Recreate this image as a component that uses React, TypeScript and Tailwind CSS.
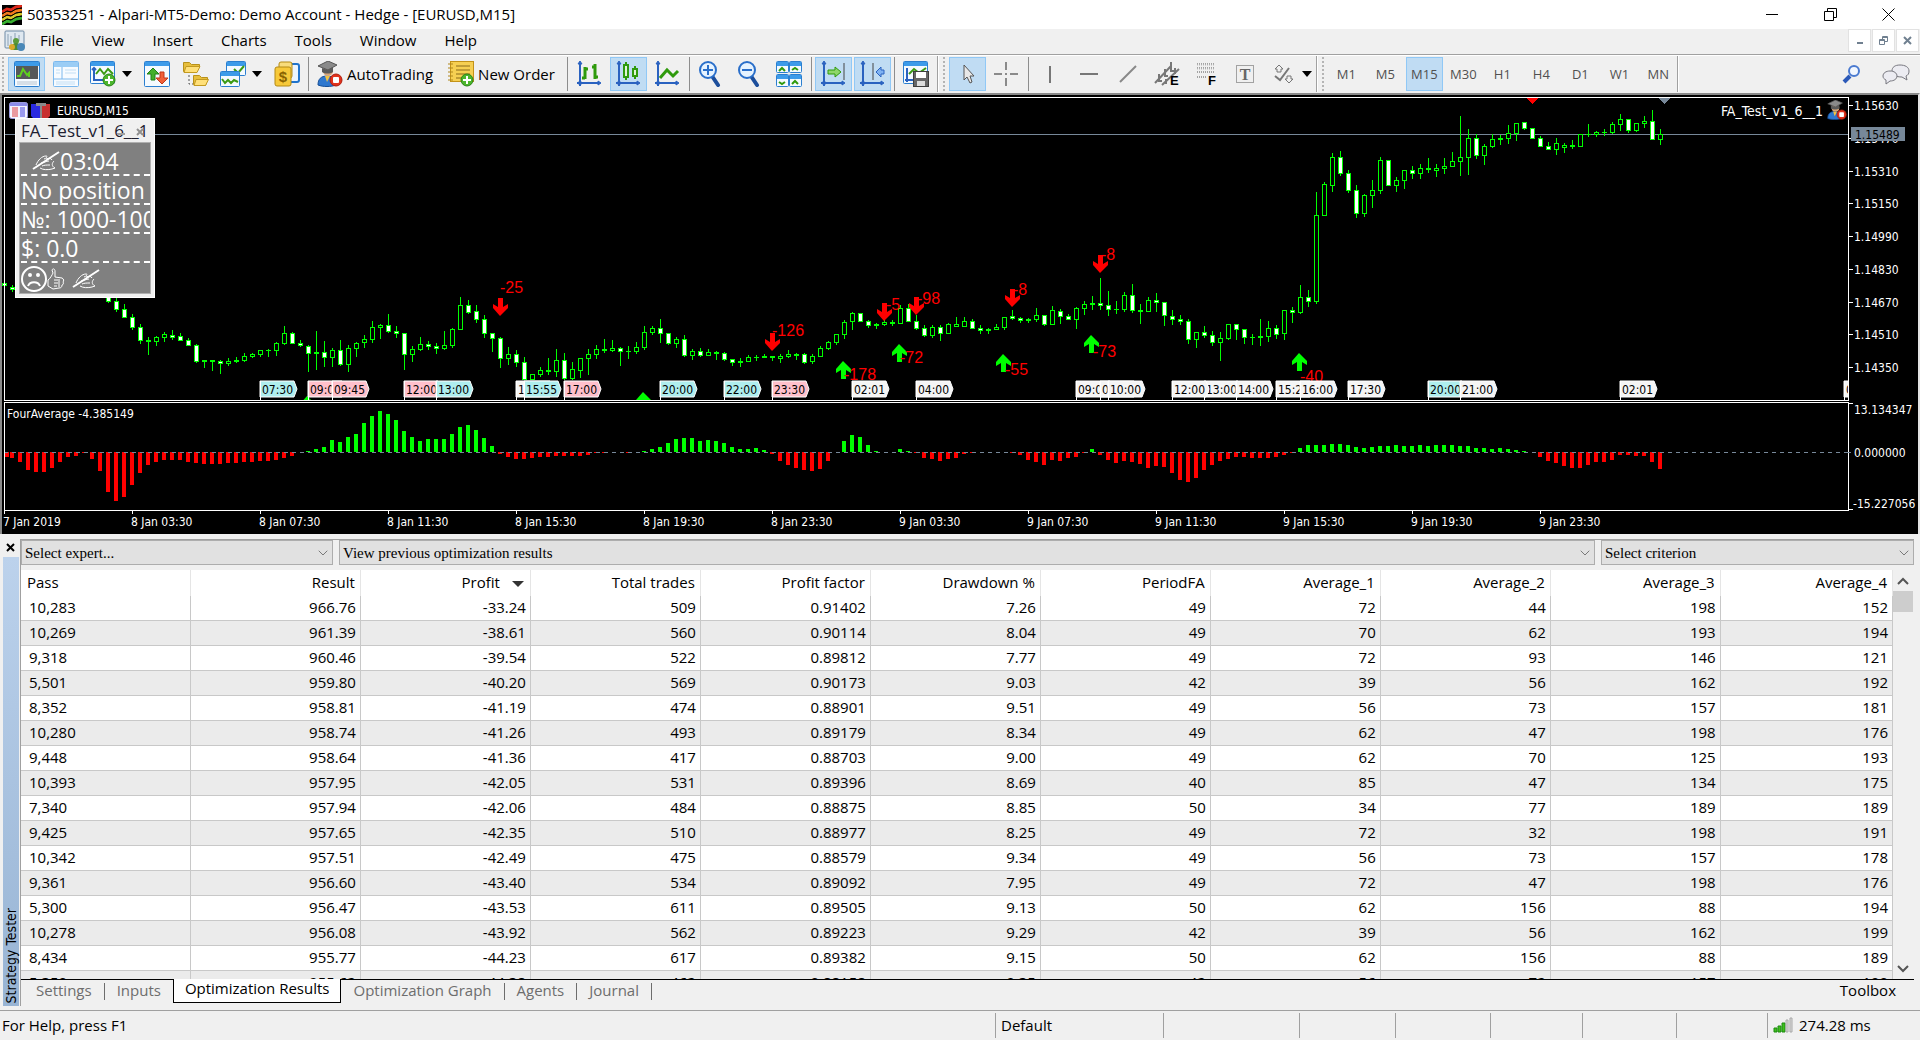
import React, { useState } from 'react';
import clsx from 'clsx';
import { ChevronDown } from 'lucide-react';

type Candle = [number, number, number, number, number];

const FIRST_X = 4;
const STEP = 8;
const ZERO_Y = 452;

// [high, body top, body bottom, low, filled] for every visible bar
const candlesStart: Candle[] = [
    [282, 283, 286, 286, 1], [285, 287, 290, 292, 1],
];

// starts at bar 13, the bars before it are behind the panel
const candlesRest: Candle[] = [
    [296, 297, 302, 303, 1], [298, 301, 310, 312, 1], [304, 309, 318, 318, 1], [314, 317, 328, 330, 1],
    [324, 327, 341, 344, 1], [337, 340, 342, 355, 0], [336, 337, 342, 346, 0], [332, 334, 338, 342, 0],
    [330, 335, 338, 340, 1], [333, 336, 341, 341, 1], [338, 340, 346, 346, 1], [344, 345, 362, 363, 1],
    [360, 360, 362, 368, 0], [360, 360, 362, 371, 0], [360, 361, 364, 374, 1], [358, 361, 364, 366, 0],
    [357, 360, 362, 363, 0], [353, 356, 361, 362, 0], [353, 354, 357, 358, 0], [350, 350, 355, 357, 0],
    [349, 350, 351, 357, 0], [342, 343, 351, 356, 0], [326, 333, 344, 345, 0], [332, 333, 344, 344, 1],
    [340, 343, 346, 347, 1], [345, 346, 354, 372, 1], [331, 352, 354, 370, 0], [341, 352, 358, 367, 1],
    [348, 350, 358, 367, 0], [340, 350, 365, 366, 1], [345, 348, 365, 372, 0], [342, 343, 349, 357, 0],
    [335, 339, 343, 348, 0], [321, 327, 340, 343, 0], [324, 325, 328, 339, 0], [314, 325, 332, 333, 1],
    [326, 331, 334, 338, 1], [333, 333, 355, 370, 1], [346, 349, 355, 362, 0], [337, 344, 350, 351, 0],
    [341, 344, 347, 350, 1], [343, 346, 349, 354, 1], [331, 345, 349, 350, 0], [328, 329, 346, 348, 0],
    [297, 305, 330, 330, 0], [300, 305, 313, 314, 1], [305, 311, 320, 323, 1], [315, 319, 334, 338, 1],
    [333, 333, 339, 352, 1], [337, 338, 359, 368, 1], [347, 354, 359, 365, 0], [350, 354, 363, 367, 1],
    [357, 362, 380, 380, 1], [374, 374, 380, 380, 0], [367, 370, 375, 377, 0], [358, 370, 372, 375, 0],
    [349, 360, 372, 377, 0], [353, 360, 379, 380, 1], [362, 369, 379, 380, 0], [358, 358, 371, 378, 0],
    [349, 354, 359, 375, 0], [345, 349, 355, 359, 0], [339, 349, 351, 353, 0], [340, 348, 351, 352, 0],
    [347, 348, 352, 366, 1], [346, 351, 352, 359, 0], [342, 347, 352, 354, 0], [326, 332, 348, 350, 0],
    [326, 328, 333, 335, 0], [319, 328, 334, 343, 1], [333, 333, 344, 345, 1], [337, 339, 344, 348, 0],
    [335, 339, 356, 357, 1], [349, 351, 356, 360, 0], [348, 351, 356, 357, 1], [349, 352, 356, 356, 0],
    [351, 352, 354, 360, 0], [352, 353, 360, 361, 1], [359, 359, 363, 366, 1], [358, 361, 363, 367, 0],
    [355, 357, 362, 362, 0], [355, 357, 358, 361, 0], [354, 356, 358, 358, 0], [356, 356, 358, 361, 0],
    [354, 356, 359, 363, 0], [350, 354, 357, 358, 0], [353, 354, 356, 360, 0], [353, 354, 363, 364, 1],
    [354, 356, 362, 364, 0], [346, 348, 357, 357, 0], [341, 342, 349, 350, 0], [334, 334, 343, 345, 0],
    [320, 322, 335, 339, 0], [312, 313, 322, 330, 0], [313, 313, 322, 322, 1], [320, 321, 326, 328, 1],
    [323, 324, 326, 329, 0], [320, 322, 325, 326, 0], [320, 322, 324, 326, 0], [305, 308, 324, 324, 0],
    [304, 308, 322, 322, 1], [315, 321, 329, 330, 1], [325, 328, 336, 337, 1], [325, 327, 336, 338, 0],
    [325, 327, 334, 341, 1], [323, 324, 334, 334, 0], [317, 324, 327, 327, 0], [317, 321, 327, 327, 0],
    [319, 321, 329, 329, 1], [325, 328, 331, 334, 1], [328, 329, 331, 334, 0], [324, 327, 330, 330, 0],
    [317, 317, 328, 330, 0], [310, 316, 319, 320, 1], [317, 318, 321, 323, 1], [318, 319, 321, 323, 0],
    [308, 315, 320, 322, 0], [315, 315, 325, 326, 1], [306, 310, 325, 325, 0], [309, 311, 317, 324, 1],
    [314, 316, 320, 320, 1], [307, 308, 320, 329, 0], [301, 304, 309, 315, 0], [296, 303, 305, 310, 0],
    [278, 303, 306, 310, 1], [291, 305, 310, 316, 1], [301, 309, 310, 314, 0], [292, 295, 310, 312, 0],
    [284, 295, 311, 313, 1], [304, 310, 312, 324, 0], [297, 300, 312, 312, 0], [293, 300, 303, 312, 1],
    [302, 302, 316, 326, 1], [310, 316, 320, 325, 1], [315, 319, 322, 325, 1], [319, 321, 340, 344, 1],
    [332, 332, 340, 348, 0], [326, 332, 336, 338, 1], [331, 335, 343, 346, 1], [332, 338, 343, 361, 0],
    [324, 324, 339, 340, 0], [324, 324, 330, 340, 1], [329, 329, 338, 344, 1], [334, 337, 338, 345, 0],
    [319, 336, 338, 346, 0], [321, 328, 337, 342, 0], [325, 328, 335, 339, 1], [310, 310, 334, 340, 0],
    [307, 310, 313, 323, 1], [285, 297, 313, 314, 0], [290, 297, 302, 307, 1], [192, 215, 302, 304, 0],
    [182, 184, 216, 216, 0], [153, 157, 186, 192, 0], [151, 157, 174, 176, 1], [170, 173, 191, 193, 1],
    [185, 190, 214, 218, 1], [194, 195, 214, 217, 0], [180, 190, 196, 208, 0], [157, 160, 191, 194, 0],
    [160, 160, 186, 186, 1], [177, 180, 186, 192, 0], [170, 170, 181, 189, 0], [166, 170, 174, 179, 1],
    [164, 168, 174, 179, 0], [158, 168, 170, 173, 0], [164, 168, 171, 177, 0], [158, 166, 169, 174, 0],
    [152, 161, 167, 167, 0], [116, 157, 162, 176, 0], [129, 138, 158, 175, 0], [134, 138, 156, 159, 1],
    [144, 146, 156, 165, 0], [134, 139, 147, 148, 0], [135, 138, 140, 145, 0], [125, 133, 139, 144, 0],
    [123, 123, 134, 141, 0], [122, 122, 129, 130, 1], [128, 128, 139, 139, 1], [136, 138, 147, 147, 1],
    [142, 146, 150, 150, 1], [138, 143, 150, 155, 0], [143, 145, 148, 153, 0], [140, 145, 147, 149, 0],
    [134, 134, 147, 147, 0], [124, 134, 135, 137, 0], [131, 132, 135, 137, 0], [129, 132, 133, 136, 0],
    [122, 124, 133, 134, 0], [114, 119, 125, 131, 0], [119, 119, 131, 133, 1], [123, 123, 131, 132, 0],
    [116, 121, 124, 128, 0], [110, 121, 140, 140, 1], [129, 134, 140, 145, 0],
];

const averages = [
    -5, -6, -10, -18, -20, -20, -16, -10, -5, -4, -1, -7, -19, -40, -49, -45, -33, -21, -13, -10, -8, -8, -8, -10,
    -11, -12, -12, -12, -11, -11, -10, -10, -9, -9, -8, -6, -4, 0, 1, 3, 5, 12, 10, 15, 18, 29, 36, 41, 38, 32, 21,
    15, 11, 13, 13, 13, 18, 25, 27, 22, 14, 6, -2, -5, -7, -7, -6, -5, -5, -4, -4, -4, -4, -3, -1, -1, 0, 0, -1, 0,
    1, 3, 5, 9, 13, 14, 14, 11, 12, 11, 9, 5, 3, 3, 4, 2, -2, -9, -13, -16, -18, -19, -17, -9, 0, 11, 17, 15, 7, 1,
    0, 0, 3, 1, -1, -6, -7, -9, -7, -6, -2, -1, 0, 0, 0, 0, -1, -3, -8, -10, -13, -8, -9, -6, -5, -1, 3, -3, -8,
    -11, -9, -10, -12, -16, -14, -15, -21, -28, -30, -26, -18, -13, -9, -7, -5, -5, -6, -6, -6, -5, -3, -1, 4, 7, 7,
    7, 8, 8, 7, 5, 4, 5, 6, 6, 7, 6, 6, 7, 6, 7, 7, 7, 6, 6, 4, 4, 3, 4, 3, 2, 1, 0, -5, -9, -11, -14, -16, -16,
    -13, -10, -10, -8, -3, -3, -4, -4, -10, -17,
];

const CYAN = '#afeeee';
const PINK = '#ffc0cb';
const SMOKE = '#f5f5f5';

const newsTags: [number, string, string][] = [
    [260, '07:30', CYAN], [308, '09:00', PINK], [332, '09:45', PINK], [404, '12:00', PINK], [436, '13:00', CYAN],
    [516, '15:30', SMOKE], [524, '15:55', CYAN], [564, '17:00', PINK], [660, '20:00', CYAN], [724, '22:00', CYAN],
    [772, '23:30', PINK], [852, '02:01', SMOKE], [916, '04:00', SMOKE], [1076, '09:00', SMOKE], [1100, '09:30', SMOKE],
    [1108, '10:00', SMOKE], [1204, '13:00', SMOKE], [1172, '12:00', SMOKE], [1236, '14:00', SMOKE], [1276, '15:25', SMOKE],
    [1300, '16:00', SMOKE], [1348, '17:30', SMOKE], [1428, '20:00', CYAN], [1460, '21:00', SMOKE], [1620, '02:01', SMOKE],
    [1844, '09:00', SMOKE],
];

const sellArrows = [[500, 298], [772, 333], [884, 303], [916, 297], [1012, 289], [1100, 255]];
const buyArrows = [[843, 361], [899, 344], [1003, 354], [1091, 335], [1299, 353], [643, 392], [307, 396]];

const dealLabels: [number, number, string][] = [
    [500, 293, '-25'], [772, 336, '-126'], [886, 310, '-5'], [917, 304, '-98'], [844, 380, '-178'], [900, 363, '-72'],
    [1013, 295, '-8'], [1101, 260, '-8'], [1093, 357, '-73'], [1005, 375, '-55'], [1300, 382, '-40'],
];

const timeLabels = [
    '7 Jan 2019', '8 Jan 03:30', '8 Jan 07:30', '8 Jan 11:30', '8 Jan 15:30', '8 Jan 19:30', '8 Jan 23:30',
    '9 Jan 03:30', '9 Jan 07:30', '9 Jan 11:30', '9 Jan 15:30', '9 Jan 19:30', '9 Jan 23:30',
];

const priceLabels: [number, string][] = [
    [105, '1.15630'], [138, '1.15470'], [171, '1.15310'], [203, '1.15150'], [236, '1.14990'],
    [269, '1.14830'], [302, '1.14670'], [334, '1.14510'], [367, '1.14350'],
];

const columns = [
    'Pass', 'Result', 'Profit', 'Total trades', 'Profit factor', 'Drawdown %',
    'PeriodFA', 'Average_1', 'Average_2', 'Average_3', 'Average_4',
];

const results = [
    ['10,283', '966.76', '-33.24', '509', '0.91402', '7.26', '49', '72', '44', '198', '152'],
    ['10,269', '961.39', '-38.61', '560', '0.90114', '8.04', '49', '70', '62', '193', '194'],
    ['9,318', '960.46', '-39.54', '522', '0.89812', '7.77', '49', '72', '93', '146', '121'],
    ['5,501', '959.80', '-40.20', '569', '0.90173', '9.03', '42', '39', '56', '162', '192'],
    ['8,352', '958.81', '-41.19', '474', '0.88901', '9.51', '49', '56', '73', '157', '181'],
    ['10,280', '958.74', '-41.26', '493', '0.89179', '8.34', '49', '62', '47', '198', '176'],
    ['9,448', '958.64', '-41.36', '417', '0.88703', '9.00', '49', '62', '70', '125', '193'],
    ['10,393', '957.95', '-42.05', '531', '0.89396', '8.69', '40', '85', '47', '134', '175'],
    ['7,340', '957.94', '-42.06', '484', '0.88875', '8.85', '50', '34', '77', '189', '189'],
    ['9,425', '957.65', '-42.35', '510', '0.88977', '8.25', '49', '72', '32', '198', '191'],
    ['10,342', '957.51', '-42.49', '475', '0.88579', '9.34', '49', '56', '73', '157', '178'],
    ['9,361', '956.60', '-43.40', '534', '0.89092', '7.95', '49', '72', '47', '198', '176'],
    ['5,300', '956.47', '-43.53', '611', '0.89505', '9.13', '50', '62', '156', '88', '194'],
    ['10,278', '956.08', '-43.92', '562', '0.89223', '9.29', '42', '39', '56', '162', '199'],
    ['8,434', '955.77', '-44.23', '617', '0.89382', '9.15', '50', '62', '156', '88', '189'],
    ['5,350', '955.62', '-44.38', '462', '0.88158', '9.35', '42', '56', '72', '157', '190'],
];

const timeframes = ['M1', 'M5', 'M15', 'M30', 'H1', 'H4', 'D1', 'W1', 'MN'];
const menus = ['File', 'View', 'Insert', 'Charts', 'Tools', 'Window', 'Help'];
const tabs = ['Settings', 'Inputs', 'Optimization Results', 'Optimization Graph', 'Agents', 'Journal'];

/* ---------- icons ---------- */

function Icon({ children, label }: { children: React.ReactNode; label?: string }) {
    return (
        <svg width="26" height="26" viewBox="0 0 26 26" fill="none" aria-label={label} className="shrink-0">
            {children}
        </svg>
    );
}

function WindowFrame({ x = 0, y = 0, w = 26, h = 26 }) {
    return (
        <g>
            <rect x={x + 0.5} y={y + 0.5} width={w - 1} height={h - 1} rx="1" fill="#f4faff" stroke="#2b7fd0" />
            <rect x={x + 1} y={y + 1} width={w - 2} height="4" fill="#3d9be9" />
        </g>
    );
}

function Axes() {
    return (
        <g stroke="#2a62c0" strokeWidth="2" fill="#2a62c0">
            <path d="M4 2v23M1 22h22" />
            <path d="M4 0l2 3H2zM25 22l-3-2v4z" strokeWidth="1" />
            <circle cx="4" cy="22" r="1" />
        </g>
    );
}

function PlusBadge() {
    return (
        <g>
            <circle cx="19" cy="19" r="6" fill="#4cb52c" stroke="#2a8418" />
            <path d="M19 15v8M15 19h8" stroke="#fff" strokeWidth="2" />
        </g>
    );
}

const MarketWatchIcon = () => (
    <Icon>
        <WindowFrame />
        <rect x="2" y="5" width="22" height="13" fill="#56585a" />
        <path d="M3 15h3l3-7 4 6 2-2v4" stroke="#5fd01f" strokeWidth="2" />
        <path d="M3 21h20M3 23h20" stroke="#b8c4d0" />
    </Icon>
);

const NavigatorIcon = () => (
    <Icon>
        <rect x="0.5" y="0.5" width="25" height="25" rx="1" fill="#f7fbff" stroke="#7cb9ee" />
        <rect x="1" y="1" width="24" height="5" fill="#9bcdf5" />
        <path d="M9 6v12M1 18h24" stroke="#7cb9ee" />
        <path d="M3 9h4M3 12h4M12 9h11M12 12h11M3 21h19M3 23h19" stroke="#c3dff5" />
    </Icon>
);

const NewChartIcon = () => (
    <Icon>
        <WindowFrame w={25} h={23} />
        <path d="M4 8v11h15M2 9l2-2 2 2" stroke="#2a62c0" strokeWidth="2" />
        <path d="M6 13l4-5 4 5 4-5 5 5" stroke="#3b9a14" strokeWidth="2" />
        <PlusBadge />
    </Icon>
);

const SymbolsIcon = () => (
    <Icon>
        <WindowFrame />
        <path d="M9 7l6 6h-4v6H7v-6H3z" fill="#43b02a" stroke="#22801a" />
        <path d="M18 23l6-6h-4v-6h-4v6h-4z" fill="#f0603a" stroke="#c03618" />
    </Icon>
);

const FoldersIcon = () => (
    <Icon>
        <path d="M6 14v9h4" stroke="#555" strokeDasharray="2 2" />
        <path d="M0.500 10.500V1.500h6l2 2h8v2l-3 5z" fill="#e7be3c" stroke="#b8911b" />
        <path d="M3 5.500h14l-3 6H1z" fill="#ffe07a" stroke="#c39a20" />
        <path d="M10.500 23.500v-9h6l2 2h6v2l-2 6z" fill="#e7be3c" stroke="#b8911b" />
        <path d="M13 18.500h12.500l-3 6H11z" fill="#ffe07a" stroke="#c39a20" />
    </Icon>
);

const ProfilesIcon = () => (
    <Icon>
        <WindowFrame x={6} y={0} w={20} h={15} />
        <path d="M14 8l4 4 6-7" stroke="#3b9a14" strokeWidth="2" />
        <WindowFrame x={0} y={10} w={20} h={16} />
        <path d="M2 18l3 4 3-3 3 3 3-3 4 2" stroke="#3b9a14" strokeWidth="2" />
    </Icon>
);

const HistoryIcon = () => (
    <Icon>
        <rect x="13" y="3" width="12" height="18" rx="2" fill="#eaf4ff" stroke="#1f73cc" strokeWidth="2" />
        <rect x="5" y="1" width="13" height="16" rx="2" fill="#f8dc7c" stroke="#b48a15" />
        <rect x="1" y="6" width="16" height="19" rx="2" fill="#f7c93a" stroke="#b48a15" />
        <text x="9" y="21" textAnchor="middle" className="fill-[#8a6200] font-['Liberation_Sans',sans-serif] text-[15px] font-bold">$</text>
    </Icon>
);

function ExpertIcon({ size = 26 }: { size?: number }) {
    return (
        <svg width={size} height={size} viewBox="0 0 26 26" className="shrink-0">
            <path d="M1 24c0-6 3-9 9-9s9 3 9 9c-5 2-13 2-18 0z" fill="#2f78cf" stroke="#174f96" />
            <path d="M8 15l2 6 3-6z" fill="#f3c341" />
            <circle cx="11" cy="10" r="5" fill="#d8a77a" />
            <path d="M1 5l10-5 9 4-9 5z" fill="#8a8a8a" stroke="#555" />
            <path d="M5 7v4c3 2 8 2 11 0V6l-5 3z" fill="#5a5a5a" />
            <circle cx="19" cy="19" r="6" fill="#e1321c" stroke="#b01c0c" />
            <rect x="16" y="16" width="6" height="6" rx="1" fill="#fff" />
        </svg>
    );
}

const NewOrderIcon = () => (
    <Icon>
        <rect x="2.500" y="0.500" width="23" height="20" fill="#f6cf52" stroke="#c39218" />
        <path d="M8 5h14M8 9h14M8 13h14M8 17h8" stroke="#8a6a1a" />
        <path d="M0 3h5M0 7h5M0 11h5M0 15h5M0 19h5" stroke="#b0871c" />
        <PlusBadge />
    </Icon>
);

const BarsIcon = () => (
    <Icon><Axes /><path d="M9 18V6M6 17h3M9 8h3M19 18V3M16 6h3M19 16h3" stroke="#2f9a0c" strokeWidth="3" /></Icon>
);

const CandlesIcon = () => (
    <Icon>
        <Axes />
        <path d="M11 1v18M20 5v13" stroke="#2f9a0c" strokeWidth="2" />
        <path d="M9 4h4v12H9zM18 8h4v7h-4z" fill="#dff5d4" stroke="#2f9a0c" strokeWidth="2" />
    </Icon>
);

const LineIcon = () => (
    <Icon><Axes /><path d="M6 17l7-8 6 6 5-5" stroke="#2f9a0c" strokeWidth="3" /></Icon>
);

function ZoomIcon({ plus }: { plus?: boolean }) {
    return (
        <Icon>
            <path d="M14 15l6 9" stroke="#1d4f9c" strokeWidth="4" strokeLinecap="round" />
            <circle cx="10" cy="9" r="8" fill="#e6f3ff" stroke="#2a6fca" strokeWidth="2" />
            <path d={plus ? 'M5 9h10M10 4v10' : 'M5 9h10'} stroke="#2a6fca" strokeWidth="2" />
        </Icon>
    );
}

const TileIcon = () => (
    <Icon>
        <WindowFrame w={13} h={12} /><WindowFrame x={13} w={13} h={12} />
        <WindowFrame y={13} w={13} h={13} /><WindowFrame x={13} y={13} w={13} h={13} />
        <path d="M3 10l3-3 3 3M16 9l3-2 3 2M3 21l3 2 3-2M16 23l3-3 3 3" stroke="#2f9a0c" strokeWidth="2" />
    </Icon>
);

const ScrollEndIcon = () => (
    <Icon><Axes /><path d="M24 2v17" stroke="#444" strokeWidth="1" /><path d="M8 9h7V6l6 5-6 5v-3H8z" fill="#8fd66a" stroke="#2f9a0c" /></Icon>
);

const ShiftIcon = () => (
    <Icon><Axes /><path d="M14 2v17" stroke="#444" strokeWidth="1" /><path d="M25 9h-3V6l-5 5 5 5v-3h3z" fill="#7fb2f2" stroke="#2a62c0" /></Icon>
);

const SaveTemplateIcon = () => (
    <Icon>
        <WindowFrame w={25} h={23} />
        <path d="M4 7v14M2 19h8" stroke="#2a62c0" strokeWidth="2" />
        <path d="M6 13l5-5 5 4 7-5" stroke="#3b9a14" strokeWidth="2" />
        <rect x="10.500" y="10.500" width="15" height="15" fill="#666" stroke="#3d3d3d" />
        <path d="M13 11h10v6H13z" fill="#fff" />
        <path d="M14 20h8v5h-8z" fill="#ddd" />
    </Icon>
);

const CursorIcon = () => (
    <Icon><path d="M10 4v15l3-3 3 6 2-1-2-6h4z" fill="#e8e8e8" stroke="#555" strokeWidth="1" /></Icon>
);
const CrosshairIcon = () => (
    <Icon><path d="M13 1v8M13 17v8M1 13h8M17 13h8M12 13h2" stroke="#8a8a8a" strokeWidth="2" /></Icon>
);
const VLineIcon = () => <Icon><path d="M13 5v17" stroke="#777" strokeWidth="2" /></Icon>;
const HLineIcon = () => <Icon><path d="M4 13h18" stroke="#777" strokeWidth="2" /></Icon>;
const TrendIcon = () => <Icon><path d="M5 21L21 5" stroke="#888" strokeWidth="2" /></Icon>;

const ChannelIcon = () => (
    <Icon>
        <path d="M1 22L17 5M8 24L25 8M5 13v7h3M11 8v7h3M17 1v9h3M12 18v5M21 7v6" stroke="#777" strokeWidth="2" />
        <text x="16" y="24" className="fill-black font-['Liberation_Sans',sans-serif] text-[13px] font-bold">E</text>
    </Icon>
);

const FiboIcon = () => (
    <Icon>
        <path d="M4 3h18M4 7h18M4 11h18M4 16h9" stroke="#555" strokeWidth="1" strokeDasharray="1 1" />
        <path d="M4 4h18M4 8h18" stroke="#bbb" strokeDasharray="1 1" />
        <text x="15" y="24" className="fill-black font-['Liberation_Sans',sans-serif] text-[13px] font-bold">F</text>
    </Icon>
);

const TextIcon = () => (
    <Icon>
        <rect x="4.500" y="4.500" width="17" height="17" stroke="#555" strokeDasharray="1 1" />
        <text x="13" y="19" textAnchor="middle" className="fill-[#666] font-['Liberation_Serif',serif] text-[16px] font-bold">T</text>
    </Icon>
);

const ArrowsIcon = () => (
    <Icon>
        <path d="M9 4l4 4h-2v3H7V8H5z" stroke="#777" />
        <path d="M19 22l4-4h-2v-3h-4v3h-2z" stroke="#777" />
        <path d="M5 15l5 4 9-12" stroke="#777" strokeWidth="2" />
    </Icon>
);

const HandIcon = () => (
    <svg width="28" height="20" viewBox="0 0 28 20" fill="none" stroke="#fff" className="shrink-0">
        <path d="M1 18L27 1" strokeWidth="2" />
        <path d="M4 14c2-5 6-9 10-9 2 0 1 2-2 3M14 8c3-1 5-1 6 1M9 12c3 0 5-2 8-2M8 17c3 2 8 2 12 1l3-1M22 10c-2 2-3 5 1 7M10 15c2-1 5-1 8-1" strokeWidth="1" />
    </svg>
);

const SadFace = () => (
    <svg width="26" height="26" viewBox="0 0 26 26" fill="none" stroke="#fff" strokeWidth="2" className="shrink-0">
        <circle cx="13" cy="13" r="12" />
        <path d="M7 20c2-5 10-5 12 0" />
        <circle cx="9" cy="9" r="1" fill="#fff" />
        <circle cx="17" cy="9" r="1" fill="#fff" />
    </svg>
);

const ThumbIcon = () => (
    <svg width="18" height="22" viewBox="0 0 18 22" fill="none" stroke="#fff" strokeWidth="1" className="shrink-0">
        <path d="M1 12c2-1 4-5 5-7L5 2c1-2 3-1 3 1v6l7 1c2 1 2 3 1 4 1 1 0 3-1 3 0 2-1 3-3 3l-6 1-5-3z" />
        <path d="M7 12h4M7 15h4M7 18h3M12 11v8" />
    </svg>
);

/* ---------- toolbar ---------- */

interface ToolProps {
    label: string;
    active?: boolean;
    menu?: boolean;
    children: React.ReactNode;
}

function Tool({ label, active, menu, children }: ToolProps) {
    return (
        <button
            aria-label={label}
            className={clsx(
                'flex h-[34px] items-center justify-center border',
                menu ? 'w-[50px] gap-[6px]' : 'w-[37px]',
                active ? 'border-[#90c8f6] bg-[#c0dcf3]' : 'border-transparent',
            )}
        >
            {children}
            {menu && <span className="border-x-[5px] border-t-[6px] border-x-transparent border-t-black" />}
        </button>
    );
}

const Separator = () => <span className="mx-px h-[34px] w-px bg-[#8d8d8d]" />;
const Grip = () => <span className="mr-[3px] h-[34px] w-[3px] border-l-2 border-dotted border-[#b4b4b4]" />;
const BarEnd = () => <span className="mr-1 h-[36px] w-[2px] border-l border-[#a0a0a0] bg-white" />;

function Toolbar({ timeframe, onTimeframe }: { timeframe: string; onTimeframe: (tf: string) => void }) {
    return (
        <div className="flex h-[38px] items-center border-t border-white pb-[2px] pl-[2px]">
            <Grip />
            <div className="flex items-center gap-[2px]">
                <Tool label="Market Watch" active><MarketWatchIcon /></Tool>
                <Tool label="Navigator"><NavigatorIcon /></Tool>
                <Tool label="New Chart" menu><NewChartIcon /></Tool>
                <Tool label="Symbols"><SymbolsIcon /></Tool>
                <Tool label="Open Folder"><FoldersIcon /></Tool>
                <Tool label="Profiles" menu><ProfilesIcon /></Tool>
                <Tool label="History Center"><HistoryIcon /></Tool>
                <Separator />
                <button className="flex h-[34px] items-center gap-1 pl-[5px] pr-2"><ExpertIcon /> AutoTrading</button>
                <button className="flex h-[34px] items-center gap-1 pl-[5px] pr-[9px]"><NewOrderIcon /> New Order</button>
                <Separator />
                <Tool label="Bar Chart"><BarsIcon /></Tool>
                <Tool label="Candlesticks" active><CandlesIcon /></Tool>
                <Tool label="Line Chart"><LineIcon /></Tool>
                <Separator />
                <Tool label="Zoom In"><ZoomIcon plus /></Tool>
                <Tool label="Zoom Out"><ZoomIcon /></Tool>
                <Tool label="Tile Windows"><TileIcon /></Tool>
                <Separator />
                <Tool label="Auto Scroll" active><ScrollEndIcon /></Tool>
                <Tool label="Chart Shift" active><ShiftIcon /></Tool>
                <Separator />
                <Tool label="Save Template"><SaveTemplateIcon /></Tool>
            </div>
            <span className="w-[2px]" />
            <BarEnd />
            <Grip />
            <div className="flex items-center gap-[2px]">
                <Tool label="Cursor" active><CursorIcon /></Tool>
                <Tool label="Crosshair"><CrosshairIcon /></Tool>
                <Separator />
                <Tool label="Vertical Line"><VLineIcon /></Tool>
                <Tool label="Horizontal Line"><HLineIcon /></Tool>
                <Tool label="Trendline"><TrendIcon /></Tool>
                <Tool label="Equidistant Channel"><ChannelIcon /></Tool>
                <Tool label="Fibonacci Retracement"><FiboIcon /></Tool>
                <Tool label="Text Label"><TextIcon /></Tool>
                <Tool label="Arrows" menu><ArrowsIcon /></Tool>
            </div>
            <BarEnd />
            <Grip />
            <div className="flex gap-[2px] text-[13px] text-[#505050]">
                {timeframes.map(tf => (
                    <button
                        key={tf}
                        onClick={() => onTimeframe(tf)}
                        className={clsx('h-[34px] w-[37px] border', tf === timeframe ? 'border-[#90c8f6] bg-[#c0dcf3]' : 'border-transparent')}
                    >
                        {tf}
                    </button>
                ))}
            </div>
            <BarEnd />
            <div className="ml-auto flex items-center gap-5 pr-[10px]">
                <button aria-label="Search">
                    <svg width="20" height="20" viewBox="0 0 20 20" fill="none">
                        <path d="M8 12l-6 6" stroke="#2b59b8" strokeWidth="4" />
                        <circle cx="12" cy="7" r="5" fill="#f2f7ff" stroke="#4a7ad0" strokeWidth="2" />
                    </svg>
                </button>
                <button aria-label="Chat">
                    <svg width="28" height="22" viewBox="0 0 28 22" fill="#ececf2" stroke="#77777f" strokeWidth="1">
                        <path d="M18 2c5 0 9 2 9 6 0 3-1 4-3 5l1 4-5-3c-6 0-10-2-10-6s3-6 8-6z" />
                        <path d="M8 8c4 0 7 2 7 5s-3 5-7 5l-4 3v-4c-2-1-3-2-3-4 0-3 3-5 7-5z" />
                    </svg>
                </button>
            </div>
        </div>
    );
}

/* ---------- chart ---------- */

function CandleShape({ x, data }: { x: number; data: Candle }) {
    const [high, top, bottom, low, filled] = data;
    return (
        <g>
            <rect x={x} y={high} width="1" height={Math.max(low - high, 1)} fill="#00ff00" />
            <rect x={x - 2} y={top} width="5" height={Math.max(bottom - top, 1)} fill="#00ff00" />
            {bottom - top > 2 && (
                <rect x={x - 1} y={top + 1} width="3" height={bottom - top - 2} fill={filled ? '#ffffff' : '#000000'} />
            )}
        </g>
    );
}

function NewsTag({ x, text, color }: { x: number; text: string; color: string }) {
    return (
        <g>
            <path d={`M${x} 381h34l3 8-3 8h-34z`} fill={color} stroke="#fff" />
            <rect x={x} y="381" width="1" height="19" fill="#fff" />
            <text x={x + 2} y="394" fill="#000">{text}</text>
        </g>
    );
}

function Plot() {
    return (
        <svg className="block h-[439px] w-full text-[12px]">
            <clipPath id="price-area">
                <rect x="4" y="97" width="100%" height="303" />
            </clipPath>
            {/* everything below is in window coordinates, the plot begins at y = 95 */}
            <g transform="translate(0 -95)">
                <g shapeRendering="crispEdges">
                    <rect x="4" y="134" width="100%" height="1" fill="#778899" />
                    {candlesStart.map((c, i) => <CandleShape key={i} x={FIRST_X + i * STEP} data={c} />)}
                    {candlesRest.map((c, i) => <CandleShape key={i} x={FIRST_X + (i + 13) * STEP} data={c} />)}
                    {averages.map((v, i) => v !== 0 && (
                        <rect
                            key={i}
                            x={Math.max(FIRST_X + i * STEP - 2, 5)}
                            y={v > 0 ? ZERO_Y - v : ZERO_Y}
                            width="4"
                            height={Math.abs(v)}
                            fill={v > 0 ? '#00ff00' : '#ff0000'}
                        />
                    ))}
                    <line x1="4" x2="100%" y1="452.5" y2="452.5" stroke="#778899" strokeDasharray="4 4" />
                    <path d="M1526 98h12l-6 6z" fill="#ff0000" />
                    <path d="M1658 98h12l-6 6z" fill="#778899" />
                </g>
                <g clipPath="url(#price-area)">
                    {buyArrows.map(([x, y]) => (
                        <path key={x} d={`M${x} ${y}l8 8v4l-5-3v9h-5v-9l-5 3v-4z`} fill="#00ff00" />
                    ))}
                </g>
                {sellArrows.map(([x, y]) => (
                    <path key={x} d={`M${x - 2} ${y}h5v9l5-3v4l-8 8-7-8v-4l5 3z`} fill="#ff0000" />
                ))}
                <g className="fill-[#ff0000] font-['Liberation_Sans',sans-serif] text-[16px]">
                    {dealLabels.map(([x, y, text]) => <text key={x} x={x} y={y}>{text}</text>)}
                </g>
                {newsTags.map(([x, text, color]) => <NewsTag key={x} x={x} text={text} color={color} />)}
                <rect x="4" y="401" width="100%" height="1" fill="#000" />
                <g fill="#fff" shapeRendering="crispEdges">
                    <rect x="4" y="97" width="100%" height="1" />
                    <rect x="4" y="400" width="100%" height="1" />
                    <rect x="4" y="402" width="100%" height="1" />
                    <rect x="4" y="510" width="100%" height="1" />
                    <rect x="4" y="97" width="1" height="304" />
                    <rect x="4" y="402" width="1" height="112" />
                    {timeLabels.map((label, i) => (
                        <g key={label}>
                            <rect x={FIRST_X + i * 128} y="510" width="1" height="4" />
                            <text x={FIRST_X + i * 128 - 1} y="526">{label}</text>
                        </g>
                    ))}
                    <text x="7" y="418">FourAverage -4.385149</text>
                </g>
            </g>
        </svg>
    );
}

function PriceAxis() {
    return (
        <svg className="block h-[439px] w-[70px] shrink-0 text-[12px]">
            <g transform="translate(0 -95)" fill="#fff" shapeRendering="crispEdges">
                <rect x="0" y="97" width="1" height="304" />
                <rect x="0" y="402" width="1" height="109" />
                {priceLabels.map(([y, text]) => (
                    <g key={y}>
                        <rect x="1" y={y} width="4" height="1" />
                        <text x="6" y={y + 5}>{text}</text>
                    </g>
                ))}
                <rect x="3" y="127" width="54" height="14" fill="#778899" />
                <text x="7" y="139" fill="#000">1.15489</text>
                <rect x="1" y="403" width="4" height="1" />
                <rect x="1" y="509" width="4" height="1" />
                <rect x="0" y="452" width="3" height="1" fill="#778899" />
                <text x="6" y="414">13.134347</text>
                <text x="6" y="457">0.000000</text>
                <text x="5" y="508">-15.227056</text>
            </g>
        </svg>
    );
}

function InfoPanel() {
    const row = 'flex h-[29px] items-center border-b-2 border-dashed border-white';
    return (
        <div className="absolute left-[13px] top-[23px] w-[140px] overflow-hidden border border-white bg-[#f0f0f0] p-[3px] font-['Open_Sans','Noto_Sans',sans-serif] text-[#202030]">
            <div className="relative h-[20px] overflow-hidden whitespace-nowrap pl-[2px] text-[17px] leading-[17px]">
                FA_Test_v1_6__1
                <span className="absolute right-[26px] top-[11px] h-[2px] w-2 bg-[#a0a0a0]" />
                <svg width="8" height="8" viewBox="0 0 8 8" stroke="#909090" strokeWidth="2" className="absolute right-[7px] top-[6px]">
                    <path d="M1 1l6 6M7 1l-6 6" />
                </svg>
            </div>
            <div className="h-[152px] overflow-hidden whitespace-nowrap border border-[#b0b0b0] bg-[#808080] pl-px text-[23px] leading-[26px] text-white">
                <div className={clsx(row, 'mt-[4px] pl-[11px]')}><HandIcon />03:04</div>
                <div className={row}>No position</div>
                <div className={row}>№: 1000-1000</div>
                <div className={row}>$: 0.0</div>
                <div className="flex h-[31px] items-center"><SadFace /><ThumbIcon /><span className="w-[7px]" /><HandIcon /></div>
            </div>
        </div>
    );
}

function Chart() {
    return (
        <section className="relative flex border-l-2 border-r-2 border-t-2 border-l-[#8a8a8a] border-r-[#e3e3e3] border-t-[#8a8a8a] bg-black font-['DejaVu_Sans_Condensed','DejaVu_Sans',sans-serif]">
            <div className="-ml-[2px] min-w-0 flex-1"><Plot /></div>
            <PriceAxis />
            <div className="absolute left-[6px] right-[71px] top-[4px] flex items-center text-[12px] text-white">
                <svg width="19" height="17" viewBox="0 0 19 17" className="ml-px">
                    <rect x="0.500" y="0.500" width="18" height="16" rx="2" fill="#f4f4ff" stroke="#9a9ae0" />
                    <rect x="1" y="1" width="17" height="3" fill="#8c8ce8" />
                    <path d="M3 6h6M3 8h6M3 10h6M3 12h6M3 14h6" stroke="#e04040" />
                    <path d="M11 6h5M11 8h5M11 10h5M11 12h5M11 14h5" stroke="#4040e0" />
                </svg>
                <svg width="19" height="17" viewBox="0 0 19 17" className="ml-[3px]">
                    <path d="M0 2h9v14H2l-2-2z" fill="#2a2ae0" />
                    <path d="M10 2h9v12l-2 2h-7z" fill="#c83030" />
                    <path d="M5 1h10v3h-4v12H9V4H5z" fill="#8a8a8a" />
                </svg>
                <span className="ml-[7px] pt-px">EURUSD,M15</span>
                <span className="ml-auto mr-1 pt-[2px] text-[14px]">FA_Test_v1_6__1</span>
                <ExpertIcon size={20} />
            </div>
            <InfoPanel />
        </section>
    );
}

/* ---------- strategy tester ---------- */

function Combo({ label, className }: { label: string; className: string }) {
    return (
        <div className={clsx('relative', className)}>
            <select
                aria-label={label}
                className="h-[25px] w-full appearance-none border border-[#adadad] bg-[#e1e1e1] px-[3px] font-['Liberation_Serif',serif] text-[15px] leading-[20px]"
            >
                <option>{label}</option>
            </select>
            <ChevronDown className="pointer-events-none absolute right-[2px] top-[5px] h-4 w-4 text-[#444]" strokeWidth={1} />
        </div>
    );
}

function ResultsTable() {
    return (
        <div className="flex min-h-0 flex-1 overflow-hidden">
            <div className="min-w-0 flex-1 overflow-hidden bg-white">
                <table className="w-full table-fixed border-separate border-spacing-0">
                    <thead>
                        <tr>
                            {columns.map((name, i) => (
                                <th
                                    key={name}
                                    className={clsx(
                                        'h-[26px] border-r border-[#e5e5e5] p-0 pb-[2px] font-normal leading-[20px]',
                                        i === 0 ? 'pl-[6px] text-left' : 'pr-[5px] text-right',
                                        i < columns.length - 1 && 'w-[9.08%]',
                                    )}
                                >
                                    {name}
                                    {name === 'Profit' && (
                                        <span className="ml-3 mr-px inline-block border-x-[6px] border-t-[6px] border-x-transparent border-t-[#333] align-middle" />
                                    )}
                                </th>
                            ))}
                        </tr>
                    </thead>
                    <tbody>
                        {results.map(row => (
                            <tr key={row[0]} className="even:bg-[#ebebeb]">
                                {row.map((value, i) => (
                                    <td
                                        key={i}
                                        className={clsx('h-[25px] border-b border-r border-[#c8c8c8] p-0 pb-[2px] leading-[20px]', i === 0 ? 'pl-2' : 'pr-1 text-right')}
                                    >
                                        {value}
                                    </td>
                                ))}
                            </tr>
                        ))}
                    </tbody>
                </table>
            </div>
            <div className="flex w-[21px] flex-col items-center bg-[#f0f0f0] pr-px text-[#555]">
                <button aria-label="Scroll up" className="flex h-[21px] items-center">
                    <svg width="12" height="8" viewBox="0 0 12 8" fill="none" stroke="currentColor" strokeWidth="2"><path d="M1 7l5-5 5 5" /></svg>
                </button>
                <span className="h-[21px] w-full bg-[#cdcdcd]" />
                <button aria-label="Scroll down" className="mt-auto flex h-[21px] items-center">
                    <svg width="12" height="8" viewBox="0 0 12 8" fill="none" stroke="currentColor" strokeWidth="2"><path d="M1 1l5 5 5-5" /></svg>
                </button>
            </div>
        </div>
    );
}

function StrategyTester() {
    const [tab, setTab] = useState('Optimization Results');
    return (
        <section className="mt-[5px] flex min-h-0 flex-1 pl-[3px] pr-[6px]">
            <div className="flex w-[17px] shrink-0 flex-col">
                <button aria-label="Close" className="flex h-[18px] items-center justify-center pb-[2px] pr-[3px]">
                    <svg width="9" height="9" viewBox="0 0 9 9" stroke="#000" strokeWidth="2"><path d="M1 1l7 7M8 1l-7 7" /></svg>
                </button>
                <div className="flex min-h-0 w-4 flex-1 items-center bg-gradient-to-b from-[#bcd2ec] to-[#98b4d4] pb-[3px] font-['DejaVu_Sans_Condensed','DejaVu_Sans',sans-serif] text-[14px] leading-[16px] [writing-mode:sideways-lr]">
                    Strategy Tester
                </div>
            </div>
            <div className="flex min-w-0 flex-1 flex-col border-l border-t border-[#a0a0a0]">
                <div className="flex gap-[6px] pb-[5px]">
                    <Combo label="Select expert..." className="w-[312px]" />
                    <Combo label="View previous optimization results" className="flex-1" />
                    <Combo label="Select criterion" className="w-[313px]" />
                </div>
                <ResultsTable />
                <div className="flex h-[27px] shrink-0 items-start border-t border-black text-[#6d6d6d]">
                    {tabs.map((name, i) => name === tab ? (
                        <button key={name} className="-mt-px h-[24px] border border-t-0 border-black bg-white px-[11px] pb-[4px] leading-[19px] text-black">{name}</button>
                    ) : (
                        <button
                            key={name}
                            onClick={() => setTab(name)}
                            className={clsx(
                                'mt-[3px] flex h-[17px] items-center pb-[3px] pr-3 leading-[14px]',
                                i === 0 ? 'pl-[15px]' : 'pl-3',
                                tabs[i + 1] !== tab && 'border-r border-[#6d6d6d]',
                            )}
                        >
                            {name}
                        </button>
                    ))}
                    <span className="ml-auto pr-[18px] leading-[20px] text-black">Toolbox</span>
                </div>
            </div>
        </section>
    );
}

function StatusBar() {
    const cell = 'flex h-[25px] items-center border-l border-[#a0a0a0] pl-[5px] pb-[2px]';
    return (
        <footer className="mt-[4px] flex h-[30px] shrink-0 items-center border-t border-[#a0a0a0]">
            <span className="flex-1 pb-[2px] pl-[2px]">For Help, press F1</span>
            <span className={clsx(cell, 'w-[168px]')}>Default</span>
            <span className={clsx(cell, 'w-[136px]')} />
            <span className={clsx(cell, 'w-[96px]')} />
            <span className={clsx(cell, 'w-[95px]')} />
            <span className={clsx(cell, 'w-[92px]')} />
            <span className={clsx(cell, 'w-[94px]')} />
            <span className={clsx(cell, 'w-[91px]')} />
            <span className={clsx(cell, 'w-[153px] gap-[6px]')}>
                <svg width="20" height="16" viewBox="0 0 20 16">
                    <path d="M1 11h3v4H1zM5 9h3v6H5zM9 6h3v9H9z" fill="#3fc01c" stroke="#1d8a10" />
                    <path d="M13 3h2v12h-2zM17 1h2v14h-2z" fill="#ddd" stroke="#a8a8a8" />
                </svg>
                274.28 ms
            </span>
        </footer>
    );
}

/* ---------- window ---------- */

function TitleBar() {
    return (
        <header className="flex h-[29px] items-center bg-white">
            <svg width="20" height="20" viewBox="0 0 20 20" fill="none" strokeWidth="3" className="ml-[2px]">
                <rect width="20" height="20" fill="#000" />
                <path d="M0 7l5-3 4 1 5-3 6-1" stroke="#e02a1c" />
                <path d="M0 11l5-3 4 1 5-3 6-1" stroke="#f07a1c" />
                <path d="M0 15l5-3 4 1 5-3 6-1" stroke="#d8c82a" />
                <path d="M0 19l5-3 4 1 5-3 6-1" stroke="#38b030" />
                <path d="M0 9l5-3 4 1 5-3 6-1M0 13l5-3 4 1 5-3 6-1M0 17l5-3 4 1 5-3 6-1" stroke="#000" strokeWidth="1" />
            </svg>
            <h1 className="ml-[5px] pb-[2px]">50353251 - Alpari-MT5-Demo: Demo Account - Hedge - [EURUSD,M15]</h1>
            <div className="ml-auto flex">
                <button aria-label="Minimize" className="flex h-[29px] w-[58px] items-center justify-center">
                    <svg width="12" height="12" stroke="#000"><path d="M0 5.500h12" /></svg>
                </button>
                <button aria-label="Restore" className="flex h-[29px] w-[58px] items-center justify-center">
                    <svg width="13" height="13" fill="none" stroke="#000"><path d="M0.500 3.500h9v9h-9zM3.500 3V0.500h9v9H10" /></svg>
                </button>
                <button aria-label="Close window" className="flex h-[29px] w-[61px] items-center justify-center pr-[2px]">
                    <svg width="13" height="13" stroke="#000"><path d="M0.500 0.500l12 12M12.500 0.500l-12 12" /></svg>
                </button>
            </div>
        </header>
    );
}

function MenuBar() {
    const mdi = 'flex h-[23px] w-[23px] items-center justify-center border border-[#e2e2e2] bg-white';
    return (
        <nav className="flex h-[26px] items-center border-b border-[#a0a0a0] pb-[2px] pl-1">
            <svg width="22" height="22" viewBox="0 0 22 22">
                <rect x="1" y="1" width="19" height="17" rx="1" fill="#dfe8f0" stroke="#6f8aa5" />
                <path d="M4 4v12M7 6v8M11 3v8M15 5v6" stroke="#8aa0b4" />
                <circle cx="12" cy="11" r="3" fill="#5a9a3c" />
                <path d="M7 20c0-5 2-7 5-7s5 2 5 7z" fill="#4c8c34" />
                <circle cx="8" cy="17" r="3" fill="#d9a92c" />
                <circle cx="17" cy="17" r="4" fill="#4a88b8" />
            </svg>
            <div className="ml-[14px] flex gap-7 pb-px">
                {menus.map(m => <button key={m}>{m}</button>)}
            </div>
            <div className="ml-auto flex gap-px pr-px">
                <button aria-label="Minimize chart" className={mdi}>
                    <svg width="9" height="9" stroke="#708090" strokeWidth="2"><path d="M2 7h6" /></svg>
                </button>
                <button aria-label="Restore chart" className={mdi}>
                    <svg width="9" height="9" fill="none" stroke="#708090"><path d="M0.500 3.500h5v5h-5zM3.500 3V0.500h5v5H6M0 4.500h6M3 1.500h6" /></svg>
                </button>
                <button aria-label="Close chart" className={mdi}>
                    <svg width="9" height="9" stroke="#708090" strokeWidth="2"><path d="M1 1l7 7M8 1l-7 7" /></svg>
                </button>
            </div>
        </nav>
    );
}

export default function App() {
    const [timeframe, setTimeframe] = useState('M15');
    return (
        <div className="flex h-screen flex-col overflow-hidden bg-[#f0f0f0] font-['Open_Sans','Noto_Sans',sans-serif] text-[15px] leading-[20px] text-black">
            <TitleBar />
            <MenuBar />
            <Toolbar timeframe={timeframe} onTimeframe={setTimeframe} />
            <Chart />
            <StrategyTester />
            <StatusBar />
        </div>
    );
}
